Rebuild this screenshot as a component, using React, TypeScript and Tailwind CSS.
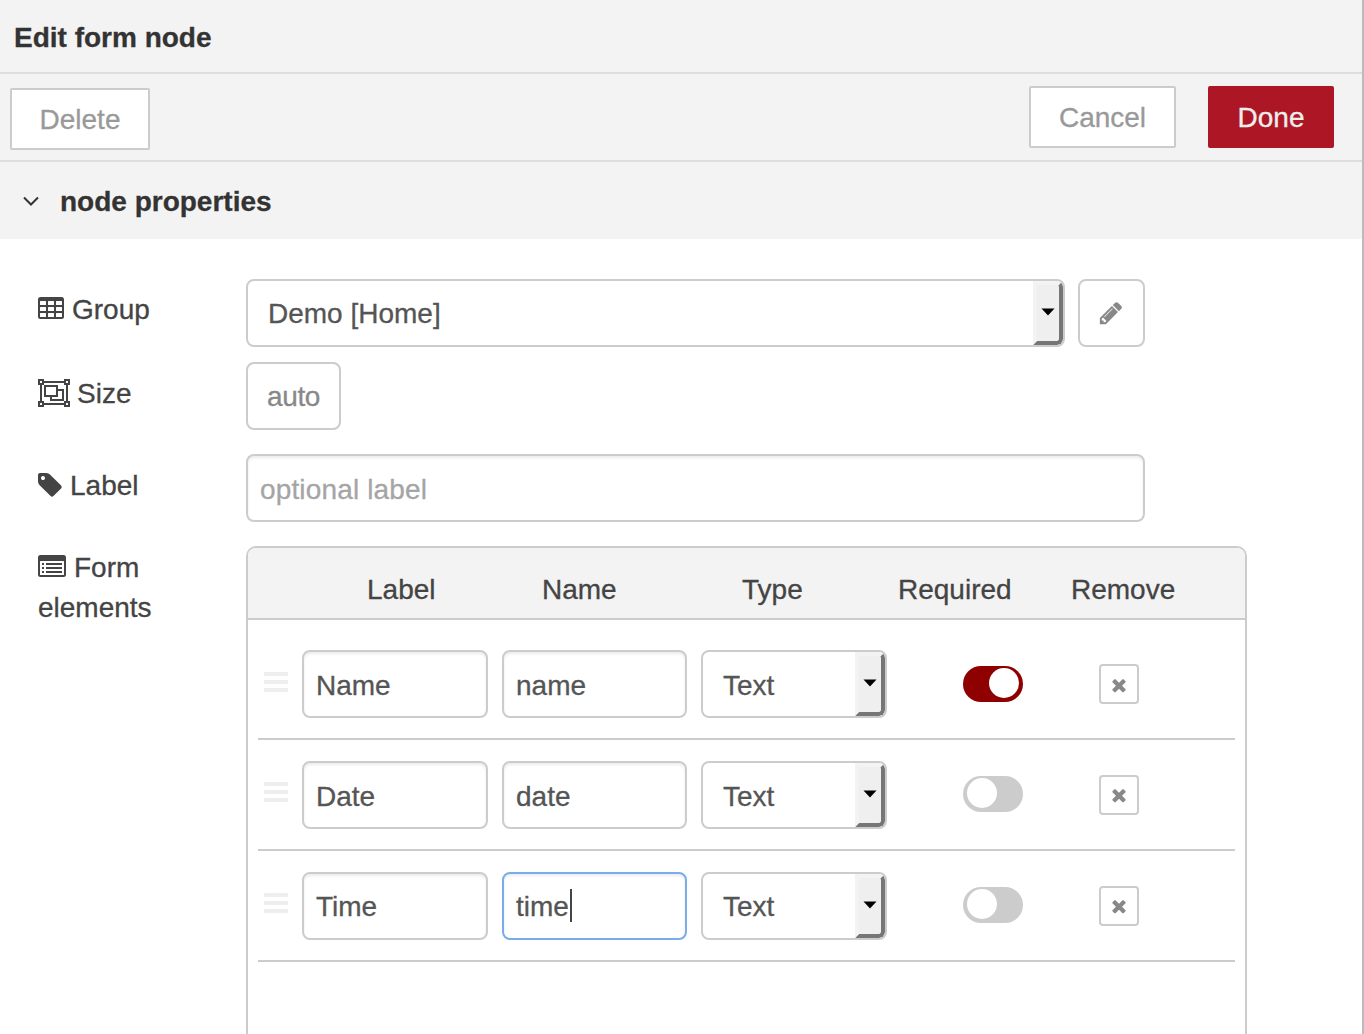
import React from 'react';

function TableIcon() {
  return (
    <svg width="26" height="22" viewBox="0 0 26 22" fill="#444">
      <path
        fillRule="evenodd"
        d="M2.5 0h21A2.5 2.5 0 0 1 26 2.5v17a2.5 2.5 0 0 1-2.5 2.5h-21A2.5 2.5 0 0 1 0 19.500v-17A2.500 2.500 0 0 1 2.500 0zM2.500 4h5q.5 0 .5.5v3q0 .5-.5.5h-5q-.5 0-.5-.5v-3q0-.5.5-.5zm8 0h5q.5 0 .5.5v3q0 .5-.5.5h-5q-.5 0-.5-.5v-3q0-.5.5-.5zm8 0h5q.5 0 .5.5v3q0 .5-.5.5h-5q-.5 0-.5-.5v-3q0-.5.5-.5zM2.500 10h5q.5 0 .5.5v3q0 .5-.5.5h-5q-.5 0-.5-.5v-3q0-.5.5-.5zm8 0h5q.5 0 .5.5v3q0 .5-.5.5h-5q-.5 0-.5-.5v-3q0-.5.5-.5zm8 0h5q.5 0 .5.5v3q0 .5-.5.5h-5q-.5 0-.5-.5v-3q0-.5.5-.5zM2.500 16h5q.5 0 .5.5v3q0 .5-.5.5h-5q-.5 0-.5-.5v-3q0-.5.5-.5zm8 0h5q.5 0 .5.5v3q0 .5-.5.5h-5q-.5 0-.5-.5v-3q0-.5.5-.5zm8 0h5q.5 0 .5.5v3q0 .5-.5.5h-5q-.5 0-.5-.5v-3q0-.5.5-.5z"
      />
    </svg>
  );
}

function ObjectGroupIcon() {
  return (
    <svg width="32" height="28" viewBox="0 0 32 28" fill="none" stroke="#444" strokeWidth="2">
      <path d="M1 1h4v4h-4zM27 1h4v4h-4zM1 23h4v4h-4zM27 23h4v4h-4zM6 3h20M6 25h20M3 6v16M29 6v16" />
      <path d="M7 7h12v10H7zM20 11h5v10H13v-3" />
    </svg>
  );
}

function TagIcon() {
  return (
    <svg width="24" height="24" viewBox="128 128 1536 1536" fill="#444">
      <path d="M576 448q0-53-37.5-90.5t-90.5-37.5-90.5 37.5-37.5 90.500 37.500 90.500 90.500 37.500 90.500-37.500 37.500-90.500zm1067 576q0 53-37 90l-491 492q-39 37-91 37-53 0-90-37l-715-716q-38-37-64.500-101t-26.500-117v-416q0-52 38-90t90-38h416q53 0 117 26.500t102 64.500l715 714q37 39 37 91z" />
    </svg>
  );
}

function ListAltIcon() {
  return (
    <svg width="28" height="22" viewBox="0 0 28 22" fill="#444">
      <path
        fillRule="evenodd"
        d="M2.500 0h23A2.500 2.500 0 0 1 28 2.500v17a2.500 2.500 0 0 1-2.500 2.500h-23A2.500 2.500 0 0 1 0 19.500v-17A2.500 2.500 0 0 1 2.500 0zM2.500 6Q2 6 2 6.500v13q0 .5.5.5h23q.5 0 .5-.5v-13q0-.5-.5-.5z"
      />
      <path d="M4 8h2v2H4zM4 12h2v2H4zM4 16h2v2H4zM8 8h16v2H8zM8 12h16v2H8zM8 16h16v2H8z" />
    </svg>
  );
}

function PencilIcon() {
  return (
    <svg width="26" height="26" viewBox="0 0 1792 1792" fill="#888" className="mr-px">
      <path d="M491 1536l91-91-235-235-91 91v107h128v128h107zm523-928q0-22-22-22-10 0-17 7l-542 542q-7 7-7 17 0 22 22 22 10 0 17-7l542-542q7-7 7-17zm-54-192l416 416-832 832h-416v-416zm683 96q0 53-37 90l-166 166-416-416 166-165q36-38 90-38 53 0 91 38l235 234q37 39 37 91z" />
    </svg>
  );
}

function RemoveIcon() {
  return (
    <svg width="20" height="20" viewBox="0 0 1792 1792" fill="#888" className="mr-px">
      <path d="M1490 1322q0 40-28 68l-136 136q-28 28-68 28t-68-28l-294-294-294 294q-28 28-68 28t-68-28l-136-136q-28-28-28-68t28-68l294-294-294-294q-28-28-28-68t28-68l136-136q28-28 68-28t68 28l294 294 294-294q28-28 68-28t68 28l136 136q28 28 28 68t-28 68l-294 294 294 294q28 28 28 68z" />
    </svg>
  );
}

function Select({ value, className }: { value: string; className: string }) {
  return (
    <div className={`flex h-[68px] shrink-0 overflow-hidden rounded-[8px] border-2 border-[#ccc] bg-white pl-5 text-[#555] ${className}`}>
      <span className="flex-1">{value}</span>
      <span className="flex w-[30px] items-center justify-center rounded-r-[6px] border-4 border-t-[#f3f3f3] border-r-[#767676] border-b-[#767676] border-l-[#f3f3f3] bg-[#efefef]">
        <svg width="14" height="8" viewBox="0 0 14 8" className="-mt-0.5 shrink-0">
          <path d="M0.500 0.500h13L7 7.500z" fill="#000" />
        </svg>
      </span>
    </div>
  );
}

function TextField({ value, className, focused = false }: { value: string; className: string; focused?: boolean }) {
  return (
    <div
      className={`flex h-[68px] shrink-0 items-start rounded-[8px] border-2 bg-white pl-3 leading-[64px] shadow-[inset_0_2px_3px_rgba(0,0,0,0.08)] ${
        focused ? 'border-[#79aceb]' : 'border-[#ccc]'
      } ${className}`}
    >
      <span>{value}</span>
      {focused && <span className="mt-[14px] ml-px h-[33px] w-0.5 bg-[#444]" />}
    </div>
  );
}

type Row = { label: string; name: string; required: boolean; focused?: boolean; inset: string; select: string; nudge: string; remove: string };

const rows: Row[] = [
  { label: 'Name', name: 'name', required: true, inset: 'pt-0.5', select: 'leading-[68px]', nudge: 'mt-px', remove: 'pt-0.5' },
  { label: 'Date', name: 'date', required: false, inset: 'pt-0.5', select: 'leading-[68px]', nudge: '', remove: '' },
  { label: 'Time', name: 'time', required: false, focused: true, inset: 'pt-px', select: 'leading-[66px]', nudge: '', remove: '' },
];

function ElementRow({ row }: { row: Row }) {
  return (
    <li className="flex h-[111px] items-start border-b-2 border-[#ccc] pl-1.5 pt-[21px]">
      <div className={`w-6 pt-[21px] ${row.nudge}`}>
        <div className="flex flex-col gap-1">
          <span className="h-1 rounded-[1px] bg-[#eee]" />
          <span className="h-1 rounded-[1px] bg-[#eee]" />
          <span className="h-1 rounded-[1px] bg-[#eee]" />
        </div>
      </div>
      <TextField value={row.label} className={`ml-[14px] w-[186px] text-[#555] ${row.inset}`} />
      <TextField value={row.name} focused={row.focused} className={`ml-[14px] w-[185px] text-[#555] ${row.inset}`} />
      <Select value="Text" className={`ml-[14px] w-[186px] ${row.select}`} />
      <div className={`ml-[76px] pt-[15px] ${row.nudge}`}>
        <div
          className={`flex h-9 w-[60px] rounded-full px-1 pt-0.5 ${
            row.required ? 'justify-end bg-[#8f0000]' : 'justify-start bg-[#ccc]'
          }`}
        >
          <span className="size-[30px] rounded-full bg-white" />
        </div>
      </div>
      <button className={`mt-[14px] ml-[76px] flex size-10 items-center justify-center rounded-[4px] border-2 border-[#ccc] bg-white ${row.remove}`}>
        <RemoveIcon />
      </button>
    </li>
  );
}

export default function App() {
  return (
    <div className="flex h-[1034px] w-[1364px] flex-col overflow-hidden border-r-2 border-[#bbb] bg-white font-['Liberation_Sans',sans-serif] text-[28px] text-[#444] [-webkit-text-stroke:0.3px]">
      <header className="h-[74px] shrink-0 border-b-2 border-[#ddd] bg-[#f3f3f3] pl-3.5 leading-[76px] font-bold text-[#333]">
        Edit form node
      </header>
      <div className="flex h-[88px] shrink-0 items-start justify-between border-b-2 border-[#ddd] bg-[#f3f3f3] pr-7 pl-2.5 pt-3">
        <button className="mt-0.5 h-[62px] w-[140px] rounded-[2px] border-2 border-[#ccc] bg-white pt-px leading-[57px] text-[#999]">
          Delete
        </button>
        <div className="flex gap-8">
          <button className="h-[62px] w-[147px] rounded-[2px] border-2 border-[#ccc] bg-white pt-px leading-[57px] text-[#999]">
            Cancel
          </button>
          <button className="h-[62px] w-[126px] rounded-[2px] bg-[#ad1625] pt-px leading-[61px] text-[#eee]">Done</button>
        </div>
      </div>
      <div className="flex h-[77px] shrink-0 items-center bg-[#f3f3f3] pl-[23px] font-bold text-[#333]">
        <svg width="16" height="10" viewBox="0 0 16 10" fill="none" stroke="#333" strokeWidth="2" className="mr-[21px]">
          <path d="M1 1.500l7 7 7-7" />
        </svg>
        <span className="pt-0.5">node properties</span>
      </div>

      <main className="flex flex-1 flex-col pt-10 pl-[38px]">
        <div className="flex h-[83px]">
          <div className="flex w-[208px] gap-2 pt-[11px] leading-10">
            <span className="pt-[7px]"><TableIcon /></span>
            <span>Group</span>
          </div>
          <Select value="Demo [Home]" className="w-[819px] leading-[66px]" />
          <button className="ml-[13px] flex h-[68px] w-[67px] items-center justify-center rounded-[8px] border-2 border-[#ccc] bg-white">
            <PencilIcon />
          </button>
        </div>
        <div className="flex h-[92px]">
          <div className="flex w-[208px] gap-2 pt-3 leading-10">
            <span className="pt-[5px]"><ObjectGroupIcon /></span>
            <span className="-ml-px">Size</span>
          </div>
          <button className="h-[68px] w-[95px] rounded-[8px] border-2 border-[#ccc] bg-white pt-px leading-[63px] tracking-[-0.4px] text-[#888]">
            auto
          </button>
        </div>
        <div className="flex h-[92px]">
          <div className="flex w-[208px] gap-2 pt-3 leading-10">
            <span className="pt-[7px]"><TagIcon /></span>
            <span>Label</span>
          </div>
          <TextField value="optional label" className="w-[899px] pt-0.5 tracking-[0.15px] text-[#a5a5a5]" />
        </div>
        <div className="flex flex-1">
          <div className="w-[208px] pt-0.5 leading-10">
            <div className="flex gap-2">
              <span className="pt-[7px]"><ListAltIcon /></span>
              <span>Form</span>
            </div>
            <div>elements</div>
          </div>
          <section className="w-[1001px] rounded-t-[10px] border-2 border-b-0 border-[#ccc]">
            <div className="flex h-[72px] rounded-t-[8px] border-b-2 border-[#ccc] bg-[#f3f3f3] pl-[119px] leading-[84px]">
              <span className="w-[175px]">Label</span>
              <span className="w-[200px]">Name</span>
              <span className="w-[156px]">Type</span>
              <span className="w-[173px]">Required</span>
              <span>Remove</span>
            </div>
            <ul className="mr-[10px] ml-[10px] pt-[9px]">
              {rows.map((row) => (
                <ElementRow key={row.label} row={row} />
              ))}
            </ul>
          </section>
        </div>
      </main>
    </div>
  );
}
